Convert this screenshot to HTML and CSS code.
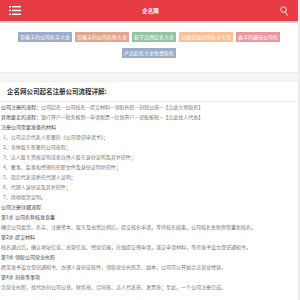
FILE: index.html
```html
<!DOCTYPE html>
<html>
<head>
<meta charset="utf-8">
<title>企名网</title>
<link rel="stylesheet" href="styles.css">
</head>
<body>
<div class="page">
  <div class="header">
    <svg class="menu" width="12" height="11" viewBox="0 0 12 11">
      <rect x="0" y="1" width="2" height="1.4" fill="#fff"/>
      <rect x="3" y="1" width="9" height="1.4" fill="#fff"/>
      <rect x="0" y="4.8" width="2" height="1.4" fill="#fff"/>
      <rect x="3" y="4.8" width="9" height="1.4" fill="#fff"/>
      <rect x="0" y="8.6" width="2" height="1.4" fill="#fff"/>
      <rect x="3" y="8.6" width="9" height="1.4" fill="#fff"/>
    </svg>
    <span class="logo">企名网</span>
    <svg class="search" width="8" height="10" viewBox="0 0 8 10">
      <circle cx="3.5" cy="3.5" r="2.8" fill="none" stroke="#fff" stroke-width="0.9"/>
      <line x1="5.4" y1="5.8" x2="7.4" y2="9.4" stroke="#fff" stroke-width="1"/>
    </svg>
  </div>

  <div class="tags">
    <a class="tag blue">带鑫字的公司名字大全</a>
    <a class="tag brown">带鑫字的公司名称大全</a>
    <a class="tag green">鞋子品牌起名大全</a>
    <a class="tag orange">合建贸易公司名字大全</a>
    <a class="tag red">鑫字的最佳公司名</a>
    <a class="tag blue">产品起名大全免费取名</a>
  </div>

  <div class="article">
    <h2>企名网公司起名注册公司流程详解:</h2>
    <div class="content">
      <p><b>公司注册的流程：</b>公司起名—公司核名—提交材料—领取执照—刻制公章—【点此大师取名】</p>
      <p><b>其他要走的流程：</b>银行开户—税务报到—申请税票—社保开户—记账报税—【点此找人代办】</p>
      <p><b>注册公司需要准备的材料</b></p>
      <p class="item">1、公司法定代表人签署的《公司登记申请书》；</p>
      <p class="item">2、全体股东签署的公司章程；</p>
      <p class="item">3、法人股东资格证明或者自然人股东身份证明及其复印件；</p>
      <p class="item">4、董事、监事和经理的任职文件及身份证明复印件；</p>
      <p class="item">5、指定代表或委托代理人证明；</p>
      <p class="item">6、代理人身份证及其复印件；</p>
      <p class="item">7、场地租赁证明。</p>
      <p><b>公司注册详细流程</b></p>
      <p><b>第1步 公司名称核准查重</b></p>
      <p>确定公司类型、名字、注册资本、股东及出资比例后，提交核名申请，等待核名结果，公司核名失败则需重新核名。</p>
      <p><b>第2步 提交材料</b></p>
      <p>核名通过后，确认地址信息、高管信息、经营范围，在线提交预申请，递交申请材料，等待准予设立登记通知书。</p>
      <p><b>第3步 领取公司营业执照</b></p>
      <p>携带准予设立登记通知书、办理人身份证原件，领取营业执照正、副本，公司可以开始合法营业经营。</p>
      <p><b>第4步 刻章等事项</b></p>
      <p>凭营业执照，找代办刻公司公章、财务章、合同章、法人代表章、发票章；至此，一个公司注册完成。</p>
    </div>
  </div>
</div>
</body>
</html>
```

FILE: styles.css
```css
*{margin:0;padding:0;}
body{background:#ececec;font-family:"Noto Sans CJK SC","Liberation Sans",sans-serif;overflow:hidden;}
.page{margin-right:2px;background:#f5f5f5;}
.header{height:21px;background:#e83c44;border-bottom:2px solid #c7d0d6;display:flex;align-items:center;justify-content:space-between;padding:0 10px 0 9px;}
.menu{display:block;}
.logo{color:#fff;font-size:5.5px;font-weight:bold;}
.search{display:block;}
.tags{background:#fff;padding:9px 14px 14px;display:flex;flex-wrap:wrap;justify-content:center;gap:6px 3px;border-bottom:1px solid #ececec;}
.tag{display:block;height:10px;line-height:10px;padding:0 2px;font-size:5px;color:#fff;}
.blue{background:#9cadc7;}
.brown{background:#e2a68e;}
.green{background:#92c3a2;}
.orange{background:#fbc096;}
.red{background:#e9979d;}
.article{background:#fff;margin-top:8px;border-top:1px solid #ececec;}
.article h2{font-size:6.5px;font-weight:bold;color:#333;line-height:19px;padding-left:7px;border-bottom:1px solid #eee;}
.content{padding:0 0 10px 1px;}
.content p{font-size:5px;line-height:10px;color:#777;white-space:nowrap;}
.content b{color:#444;font-weight:normal;}
.content .item{padding-left:2px;}
```
